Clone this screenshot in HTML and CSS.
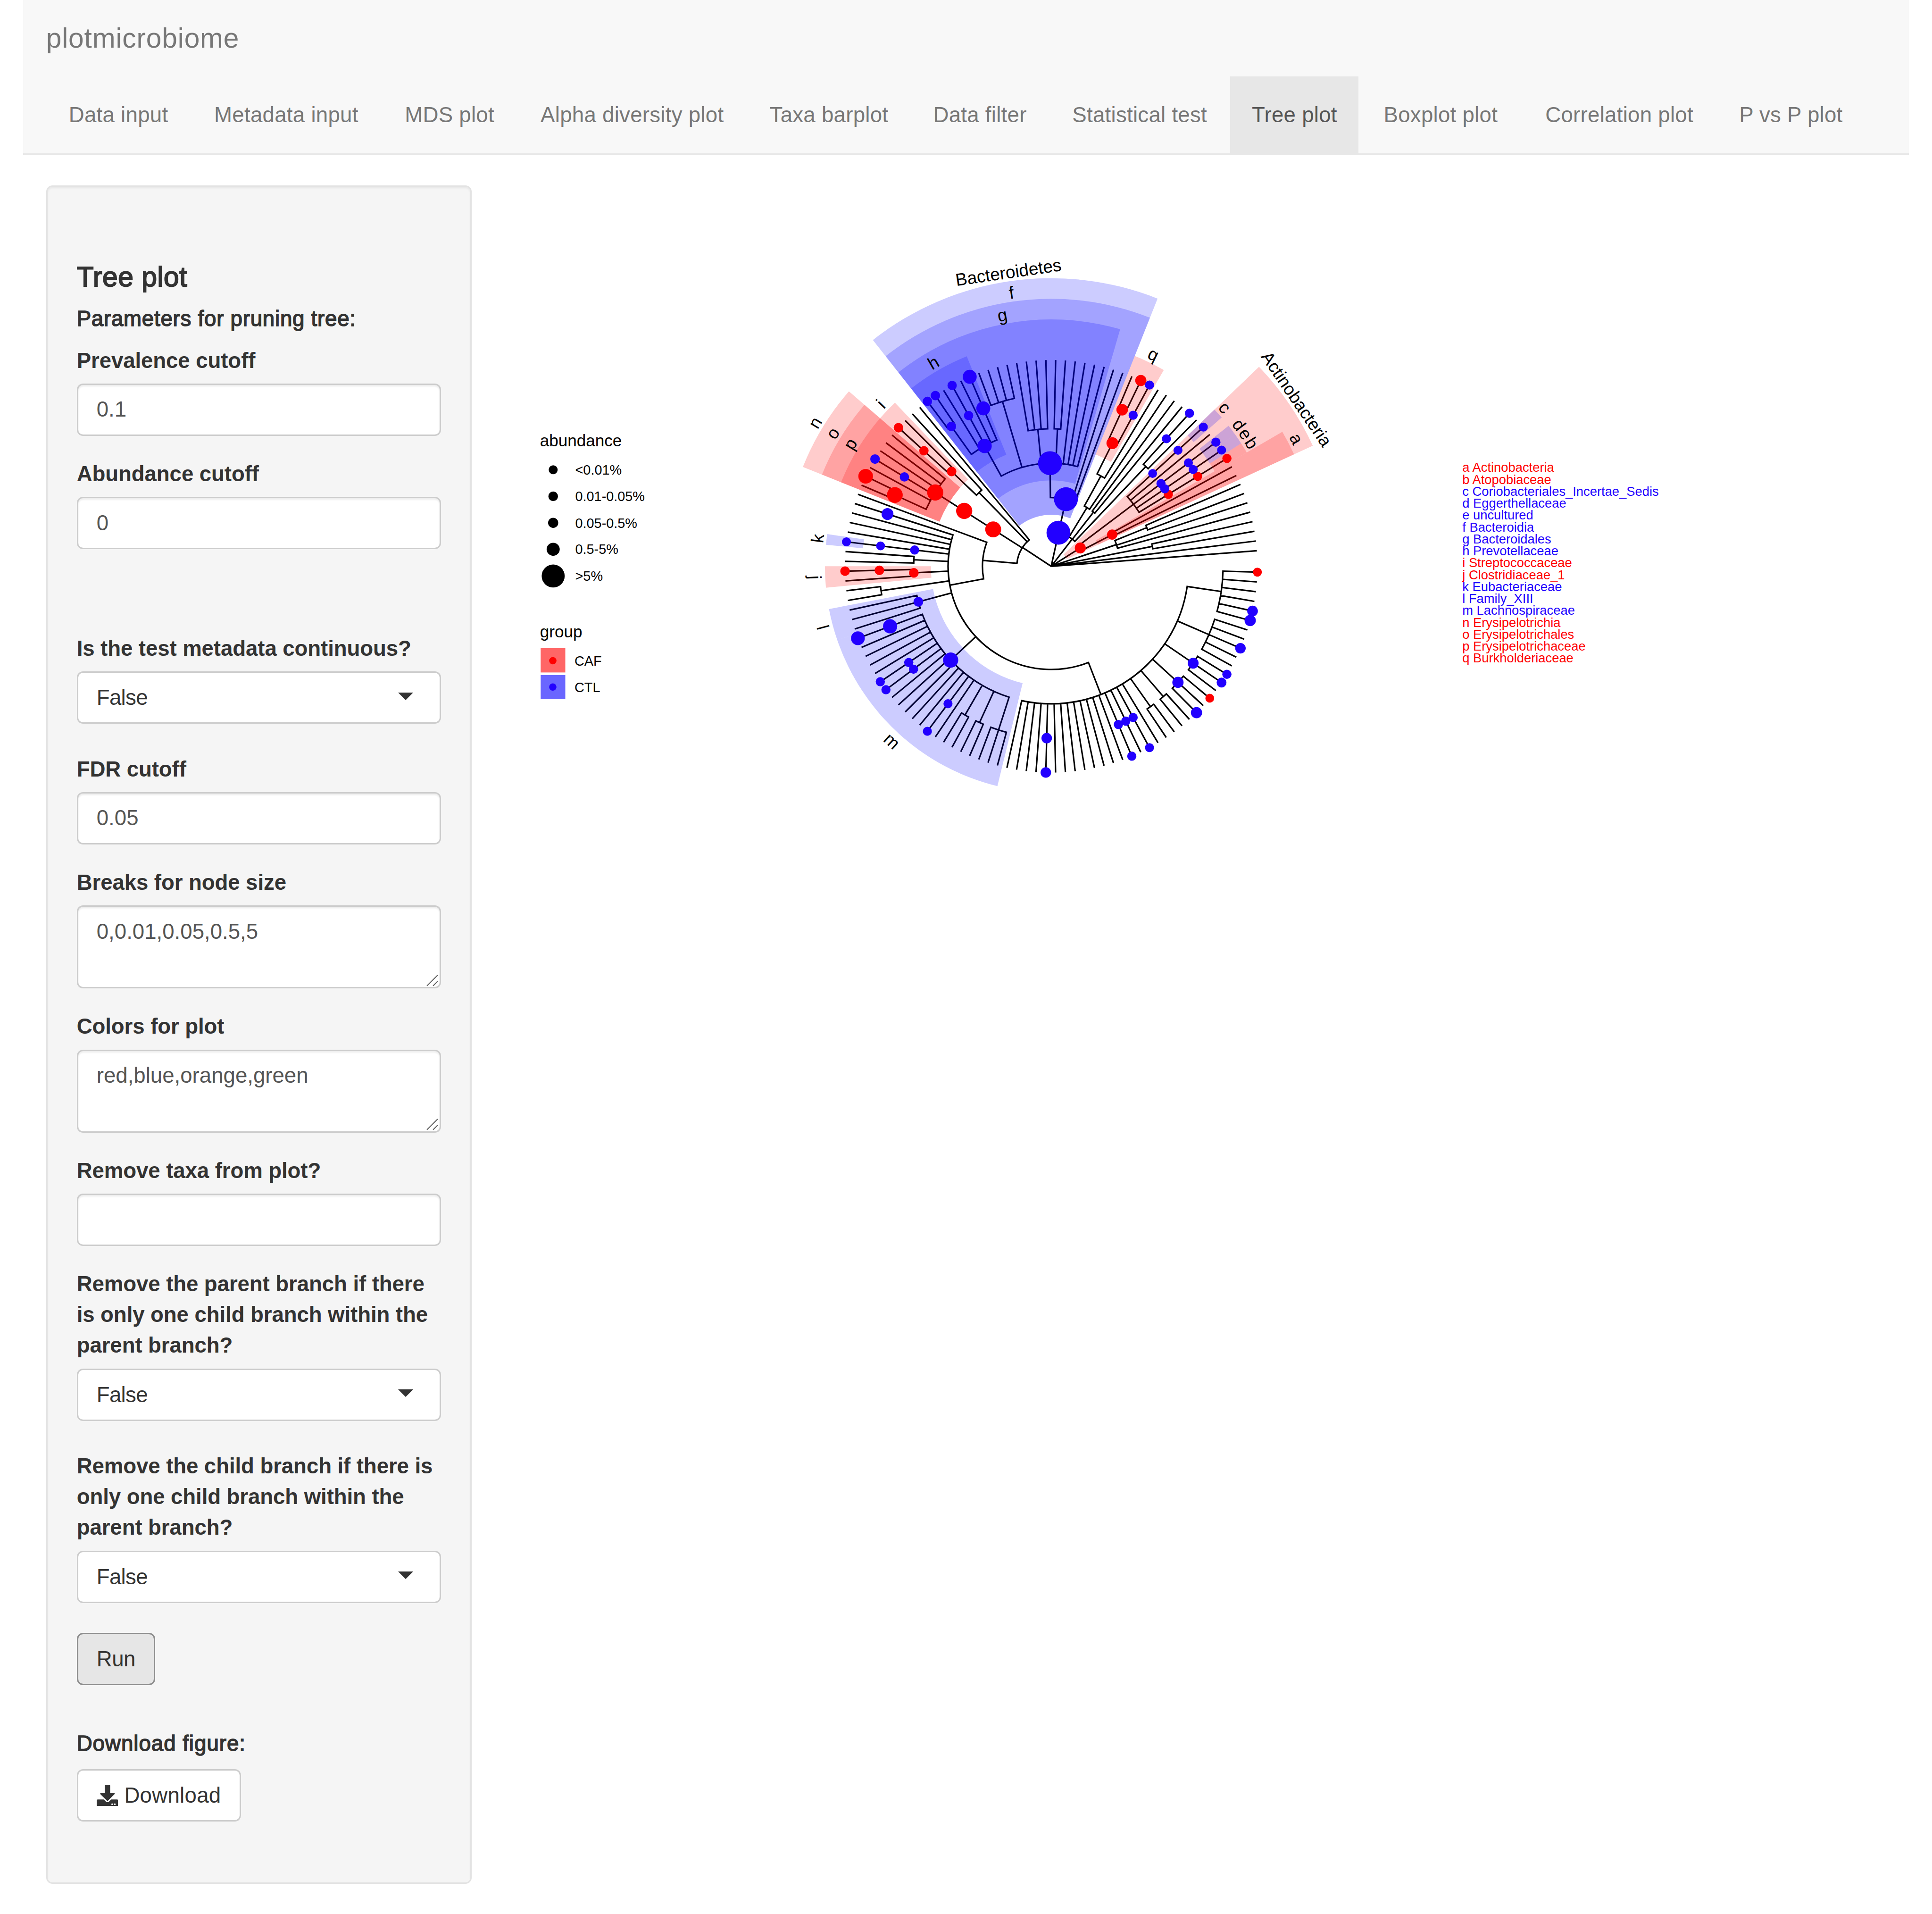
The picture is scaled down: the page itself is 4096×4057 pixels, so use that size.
FILE: index.html
```html
<!DOCTYPE html>
<html lang="en">
<head>
<meta charset="utf-8">
<title>plotmicrobiome</title>
<link rel="stylesheet" href="styles.css">
</head>
<body>
<div class="page">
  <nav class="navbar">
    <div class="brand">plotmicrobiome</div>
    <ul class="tabs">
      <li class="tab">Data input</li>
      <li class="tab">Metadata input</li>
      <li class="tab">MDS plot</li>
      <li class="tab">Alpha diversity plot</li>
      <li class="tab">Taxa barplot</li>
      <li class="tab">Data filter</li>
      <li class="tab">Statistical test</li>
      <li class="tab active">Tree plot</li>
      <li class="tab">Boxplot plot</li>
      <li class="tab">Correlation plot</li>
      <li class="tab">P vs P plot</li>
    </ul>
  </nav>
  <div class="content">
    <form class="well">
      <h4 class="title">Tree plot</h4>
      <h5 class="subtitle">Parameters for pruning tree:</h5>
      <div class="group">
        <label class="label">Prevalence cutoff</label>
        <input class="control" type="text" value="0.1">
      </div>
      <div class="group group-spaced">
        <label class="label">Abundance cutoff</label>
        <input class="control" type="text" value="0">
      </div>
      <div class="group group-select">
        <label class="label">Is the test metadata continuous?</label>
        <div class="control select"><span>False</span><i class="caret"></i></div>
      </div>
      <div class="group">
        <label class="label">FDR cutoff</label>
        <input class="control" type="text" value="0.05">
      </div>
      <div class="group area">
        <label class="label">Breaks for node size</label>
        <textarea class="control textarea">0,0.01,0.05,0.5,5</textarea>
        <svg class="grip" viewBox="0 0 7 7"><path d="M0 7L7 0M4 7L7 4"/></svg>
      </div>
      <div class="group area">
        <label class="label">Colors for plot</label>
        <textarea class="control textarea" spellcheck="false">red,blue,orange,green</textarea>
        <svg class="grip" viewBox="0 0 7 7"><path d="M0 7L7 0M4 7L7 4"/></svg>
      </div>
      <div class="group">
        <label class="label">Remove taxa from plot?</label>
        <input class="control" type="text" value="">
      </div>
      <div class="group group-select">
        <label class="label">Remove the parent branch if there<br>is only one child branch within the<br>parent branch?</label>
        <div class="control select"><span>False</span><i class="caret"></i></div>
      </div>
      <div class="group group-select">
        <label class="label">Remove the child branch if there is<br>only one child branch within the<br>parent branch?</label>
        <div class="control select"><span>False</span><i class="caret"></i></div>
      </div>
      <button class="btn btn-active" type="button">Run</button>
      <h5 class="subtitle download-title">Download figure:</h5>
      <button class="btn" type="button"><svg class="icon" viewBox="0 0 512 512"><path d="M216 0h80c13.3 0 24 10.7 24 24v168h87.7c17.8 0 26.7 21.5 14.1 34.1L269.7 378.3c-7.5 7.5-19.8 7.5-27.3 0L90.1 226.1c-12.6-12.6-3.7-34.1 14.1-34.1H192V24c0-13.3 10.7-24 24-24zm296 376v112c0 13.3-10.7 24-24 24H24c-13.3 0-24-10.7-24-24V376c0-13.3 10.7-24 24-24h146.7l49 49c20.1 20.1 52.5 20.1 72.6 0l49-49H488c13.3 0 24 10.7 24 24zm-124 88c0-11-9-20-20-20s-20 9-20 20 9 20 20 20 20-9 20-20zm64 0c0-11-9-20-20-20s-20 9-20 20 9 20 20 20 20-9 20-20z"/></svg><span class="btn-text">Download</span></button>
    </form>
    <main class="main">
      <svg class="plot" viewBox="1407.8 504.4 3659 1800">
        <g class="legend">
          <text class="legend-title" x="1469" y="1213.5">abundance</text>
          <circle cx="1505" cy="1277.8" r="12.2"/><text x="1565" y="1291">&lt;0.01%</text>
          <circle cx="1505" cy="1349.9" r="13.1"/><text x="1565" y="1363">0.01-0.05%</text>
          <circle cx="1505" cy="1422" r="13.8"/><text x="1565" y="1435.5">0.05-0.5%</text>
          <circle cx="1505" cy="1494" r="17.8"/><text x="1565" y="1507">0.5-5%</text>
          <circle cx="1505" cy="1566.7" r="31.3"/><text x="1565" y="1579">&gt;5%</text>
          <text class="legend-title" x="1469" y="1733.5">group</text>
          <rect class="swatch-red" x="1471" y="1763" width="67" height="66"/>
          <circle class="red" cx="1504" cy="1797" r="10"/><text x="1563" y="1811">CAF</text>
          <rect class="swatch-blue" x="1471" y="1836" width="67" height="65.5"/>
          <circle class="blue" cx="1504" cy="1868.6" r="10"/><text x="1563" y="1882">CTL</text>
        </g>
        <g id="tree"></g>
        <g class="taxa" id="taxa"></g>
      </svg>
    </main>
  </div>
</div>
<script src="tree.js"></script>
</body>
</html>
```
FILE: styles.css
```css
/* 1rem = 10 layout units */
html {
  font-size: 32.585px;
}
* {
  box-sizing: border-box;
}
body {
  margin: 0;
  background: #fff;
  color: #333;
  font: 1.4rem/2rem "Liberation Sans", Arial, sans-serif;
  overflow: hidden;
}
.page {
  width: 125.7rem;
  padding: 0 1.5rem;
}
.navbar {
  margin-top: -0.04rem;
  height: 10.1rem;
  padding: 0 1.5rem;
  background: #f8f8f8;
  border-bottom: 0.1rem solid #e7e7e7;
  color: #777;
}
.brand {
  height: 5rem;
  padding: 1.5rem 0;
  font-size: 1.8rem;
  letter-spacing: 0.0145em;
}
.tabs {
  display: grid;
  grid-template-columns: 9.41rem 12.43rem 8.82rem 14.94rem 10.67rem 8.98rem 11.8rem 8.35rem 10.67rem 12.58rem 9.75rem;
  margin: 0;
  padding: 0;
  list-style: none;
}
.tab {
  padding: 1.5rem 0;
  text-align: center;
  letter-spacing: 0.006em;
  white-space: nowrap;
}
.tab.active {
  background: #e7e7e7;
  color: #555;
}
.content {
  display: grid;
  grid-template-columns: 27.675rem 1fr;
  column-gap: 3rem;
  align-items: start;
  padding: 0 1.5rem;
  margin-top: 2rem;
}
.well {
  height: 110.47rem;
  padding: 4.9rem 1.9rem 1.9rem;
  background: #f5f5f5;
  border: 0.1rem solid #e3e3e3;
  border-radius: 0.4rem;
  box-shadow: inset 0 0.1rem 0.1rem rgba(0, 0, 0, 0.05);
}
.title,
.subtitle {
  margin: 0 0 1rem;
  font-weight: 400;
  -webkit-text-stroke: 0.035em #333;
}
.title {
  margin-bottom: 1.06rem;
  font-size: 1.8rem;
  line-height: 1.9rem;
  letter-spacing: 0.01em;
}
.subtitle {
  margin-bottom: 0.94rem;
  font-size: 1.4rem;
  line-height: 1.5rem;
  letter-spacing: 0.017em;
}
.download-title {
  margin: 3.07rem 0 0.9rem;
  letter-spacing: 0.022em;
}
.group {
  margin-bottom: 1.475rem;
}
.group-spaced {
  margin-bottom: 5.46rem;
}
.group-select {
  margin-bottom: 1.945rem;
}
.label {
  display: block;
  margin-bottom: 0.5rem;
  font-weight: 700;
  letter-spacing: -0.002em;
  white-space: nowrap;
}
.control {
  display: block;
  width: 100%;
  height: 3.4rem;
  margin: 0;
  padding: 0.6rem 1.2rem;
  background: #fff;
  border: 0.1rem solid #ccc;
  border-radius: 0.4rem;
  box-shadow: inset 0 0.1rem 0.1rem rgba(0, 0, 0, 0.075);
  color: #555;
  font: inherit;
  outline: none;
}
.select {
  display: flex;
  justify-content: space-between;
  align-items: center;
  padding-right: 1.7rem;
  box-shadow: none;
  color: #333;
  letter-spacing: -0.015em;
}
.caret {
  border: 0.5rem solid transparent;
  border-top-color: #333;
  border-bottom: 0;
  margin-top: -0.2rem;
}
.textarea {
  height: 5.4rem;
  resize: none;
  overflow: hidden;
}
.area {
  position: relative;
}
.grip {
  position: absolute;
  right: 0.2rem;
  bottom: 0.18rem;
  width: 0.7rem;
  height: 0.7rem;
  overflow: visible;
  fill: none;
  stroke: #5a5a5a;
  stroke-width: 0.6;
}
.btn {
  display: flex;
  align-items: center;
  gap: 0.4rem;
  height: 3.4rem;
  padding: 0 1.2rem;
  background: #fff;
  border: 0.1rem solid #ccc;
  border-radius: 0.4rem;
  color: #333;
  font: inherit;
}
.btn-active {
  background: #e6e6e6;
  border-color: #8c8c8c;
  letter-spacing: -0.012em;
}
.btn-text {
  letter-spacing: 0.006em;
}
.icon {
  width: 1.4rem;
  height: 1.4rem;
  fill: #333;
}
.plot {
  display: block;
  width: 87.52rem;
  overflow: visible;
}
.legend {
  font-size: 37px;
  fill: #000;
}
.legend-title {
  font-size: 45px;
}
.red {
  fill: #f00;
}
.blue {
  fill: #20f;
}
.swatch-red {
  fill: #ff6666;
}
.swatch-blue {
  fill: #6a66ff;
}
.branches {
  fill: none;
  stroke: #000;
  stroke-width: 4.1;
}
.clade-red {
  fill: #f00;
  opacity: 0.2;
}
.clade-blue {
  fill: #00f;
  opacity: 0.2;
}
.clade-label {
  font-size: 47.5px;
  text-anchor: middle;
  fill: #000;
}
.taxa {
  font-size: 35.1px;
}
```
FILE: tree.js
```js
// Circular cladogram: 131 leaves, six ranks below the root.
const CX = 2859.7, CY = 1540.3, STEP = 93.5;
const SVG = 'http://www.w3.org/2000/svg';
const angle = i => (1.62 + 2.7235 * i) * Math.PI / 180;
const at = (i, r) => [CX + r * Math.cos(angle(i)), CY + r * Math.sin(angle(i))];
const pt = (i, r) => at(i, r).map(v => v.toFixed(2)).join(' ');

function add(parent, name, attrs, text) {
  const el = document.createElementNS(SVG, name);
  for (const k in attrs) el.setAttribute(k, attrs[k]);
  if (text) el.textContent = text;
  parent.appendChild(el);
  return el;
}

const range = (a, b) => Array.from({ length: b - a + 1 }, (_, k) => a + k);
const n = (depth, ...kids) => ({ depth, kids });

const ruminococcaceae = n(4, n(5, ...range(0, 5)), n(5, ...range(6, 10)), n(5, 11, 12, 13),
  n(5, 14, 15, 16), n(5, 17, 18), n(5, 19, 20), ...range(21, 37));
const lachnospiraceae = n(4, n(5, 38, 39, 40), n(5, 41, 42), n(5, 43, 44), ...range(45, 58));
const clostridiales = n(3, ruminococcaceae, lachnospiraceae, n(4, 59, 60, 61), n(5, 62, 63),
  n(4, 64, 65), n(4, 66, 67), 68, 69, 70, 71, 72);
const erysipelotrichaceae = n(4, n(5, 74, 75), 76, 77, 78, 79, 80);
const firmicutes = n(1, n(2, clostridiales, 73), erysipelotrichaceae, n(3, n(4, 81, 82), 83), 84);
const bacteroidales = n(3, n(4, n(5, 85, 86), 87, 88, 89, 90), n(5, 91, 92, 93, 94),
  n(4, 95, 96, 97, 98), n(4, 99, 100), 101, 102, 103, 104);
const bacteroidetes = n(2, bacteroidales, 105, 106);
const proteobacteria = n(1, n(2, n(3, n(4, n(5, 107, 108), 109), 110), 111), n(2, 112, 113), n(4, 114, 115));
const actinobacteria = n(1, n(3, 116, 117, 118, 119, 120), n(2, 121, 122));
const root = n(0, firmicutes, bacteroidetes, proteobacteria, actinobacteria,
  n(2, n(3, 123, 124), 125, 126), n(3, 127, 128), 129, 130);

function place(node) {
  if (typeof node === 'number') return { depth: 6, pos: node, kids: [] };
  const kids = node.kids.map(place);
  return { depth: node.depth, kids, pos: kids.reduce((s, k) => s + k.pos, 0) / kids.length };
}

let d = '';
function draw(node) {
  const r = node.depth * STEP;
  for (const kid of node.kids) {
    if (r === 0) d += `M${CX} ${CY}`;
    else d += `M${pt(node.pos, r)}A${r} ${r} 0 0 ${kid.pos > node.pos ? 1 : 0} ${pt(kid.pos, r)}`;
    d += `L${pt(kid.pos, kid.depth * STEP)}`;
    draw(kid);
  }
}
draw(place(root));
const tree = document.getElementById('tree');
add(tree, 'path', { class: 'branches', d });

// label, first leaf, last leaf, inner radius (in ranks), outer ring, colour
const clades = [
  ['Bacteroidetes', 85, 106, 1.5, 4, 'blue'], ['f', 85, 106, 1.5, 3, 'blue'],
  ['g', 85, 104, 2.5, 2, 'blue'], ['h', 85, 90, 3.5, 1, 'blue'],
  ['Actinobacteria', 116, 122, 0.5, 4, 'red'], ['a', 121, 122, 1.5, 3, 'red'],
  ['b', 120, 120, 5.5, 1, 'red'], ['c', 116, 116, 5.5, 1, 'blue'],
  ['d', 118, 118, 5.5, 1, 'blue'], ['e', 119, 119, 5.5, 1, 'blue'],
  ['i', 81, 82, 3.5, 1, 'red'], ['j', 64, 65, 3.5, 1, 'red'],
  ['k', 68, 68, 5.5, 1, 'blue'], ['l', 59, 61, 3.5, 1, 'blue'],
  ['m', 38, 58, 3.5, 1, 'blue'], ['n', 74, 80, 3.5, 3, 'red'],
  ['o', 74, 80, 3.5, 2, 'red'], ['p', 74, 80, 3.5, 1, 'red'],
  ['q', 107, 109, 3.5, 1, 'red']
];
for (const [, a, b, inner, ring, color] of clades) {
  const r0 = inner * STEP, r1 = 559.5 + 56 * ring, s = a - 0.5, e = b + 0.5;
  add(tree, 'path', {
    class: 'clade-' + color,
    d: `M${pt(s, r0)}L${pt(s, r1)}A${r1} ${r1} 0 0 1 ${pt(e, r1)}L${pt(e, r0)}A${r0} ${r0} 0 0 0 ${pt(s, r0)}Z`
  });
}

// position, rank, radius
const blue = [
  [4, 6, 14.5], [5, 6, 15.3], [8, 6, 14.3], [11, 6, 12.5], [12, 6, 13.4], [16, 6, 15.3],
  [12, 5, 14.8], [15, 5, 15.3], [22, 6, 12.3], [24, 6, 12.5], [22, 5, 12.5], [23, 5, 12.5], [24, 5, 12.5],
  [33, 6, 14.3], [33, 5, 14.3], [46, 6, 12.3], [46, 5, 12.3], [52, 6, 12.5], [53, 6, 12.5],
  [52, 5, 12.5], [53, 5, 12.5], [58, 6, 18.7], [58, 5, 19.3], [49.71, 4, 20.7], [60, 4, 13.2],
  [68, 6, 12.2], [68, 5, 12], [68, 4, 12.5], [72, 5, 16.2], [77, 6, 13], [77, 5, 12.7],
  [85, 6, 12.7], [86, 6, 12.8], [88, 6, 12.7], [90, 6, 19], [85.5, 5, 13], [88, 5, 12.7],
  [90, 5, 19], [87.9, 4, 19.5], [103, 1, 32.5], [103.09, 2, 32.5], [98.3, 3, 32.5],
  [109, 6, 12.4], [109, 5, 12.5], [114, 6, 12.5], [114, 5, 12.3],
  [116, 6, 12.2], [116, 5, 12.2], [116, 4, 12], [119, 6, 12.2], [118, 6, 12.5],
  [119, 5, 12.2], [118, 5, 12.2], [119, 4, 12.5], [118, 4, 12.5]
];
const red = [
  [0, 6, 12.2], [14, 6, 12], [65, 6, 13], [65, 5, 13], [64.5, 4, 13.2],
  [75, 6, 20], [74.5, 5, 21.5], [77.42, 4, 22], [77.42, 3, 22], [77.42, 2, 21.7],
  [81, 6, 13], [81, 5, 12.7], [81.5, 4, 13], [108, 6, 15.2], [107.5, 5, 15.7], [108.25, 4, 16.2],
  [120, 6, 12.5], [120, 5, 12.5], [120, 4, 12.5], [121.5, 2, 14], [119.75, 1, 15]
];
for (const [list, cls] of [[red, 'red'], [blue, 'blue']]) {
  for (const [i, depth, r] of list) {
    const [cx, cy] = at(i, depth * STEP);
    add(tree, 'circle', { class: cls, cx: cx.toFixed(1), cy: cy.toFixed(1), r });
  }
}

// labels read outwards on the upper half, inwards on the lower half
for (const [label, a, b, , ring] of clades) {
  const mid = (a + b) / 2, deg = 1.62 + 2.7235 * mid, lower = deg < 180;
  const [x, y] = at(mid, 559.5 + 56 * ring + (lower ? 44 : 8));
  const rot = lower ? deg - 90 : deg - 270;
  add(tree, 'text', { class: 'clade-label', transform: `translate(${x.toFixed(1)} ${y.toFixed(1)}) rotate(${rot.toFixed(1)})` }, label);
}

const taxa = [
  ['a Actinobacteria', 'red'], ['b Atopobiaceae', 'red'], ['c Coriobacteriales_Incertae_Sedis', 'blue'],
  ['d Eggerthellaceae', 'blue'], ['e uncultured', 'blue'], ['f Bacteroidia', 'blue'],
  ['g Bacteroidales', 'blue'], ['h Prevotellaceae', 'blue'], ['i Streptococcaceae', 'red'],
  ['j Clostridiaceae_1', 'red'], ['k Eubacteriaceae', 'blue'], ['l Family_XIII', 'blue'],
  ['m Lachnospiraceae', 'blue'], ['n Erysipelotrichia', 'red'], ['o Erysipelotrichales', 'red'],
  ['p Erysipelotrichaceae', 'red'], ['q Burkholderiaceae', 'red']
];
const list = document.getElementById('taxa');
taxa.forEach(([name, color], k) => add(list, 'text', { class: color, x: 3978, y: 1283.7 + 32.4 * k }, name));
```
